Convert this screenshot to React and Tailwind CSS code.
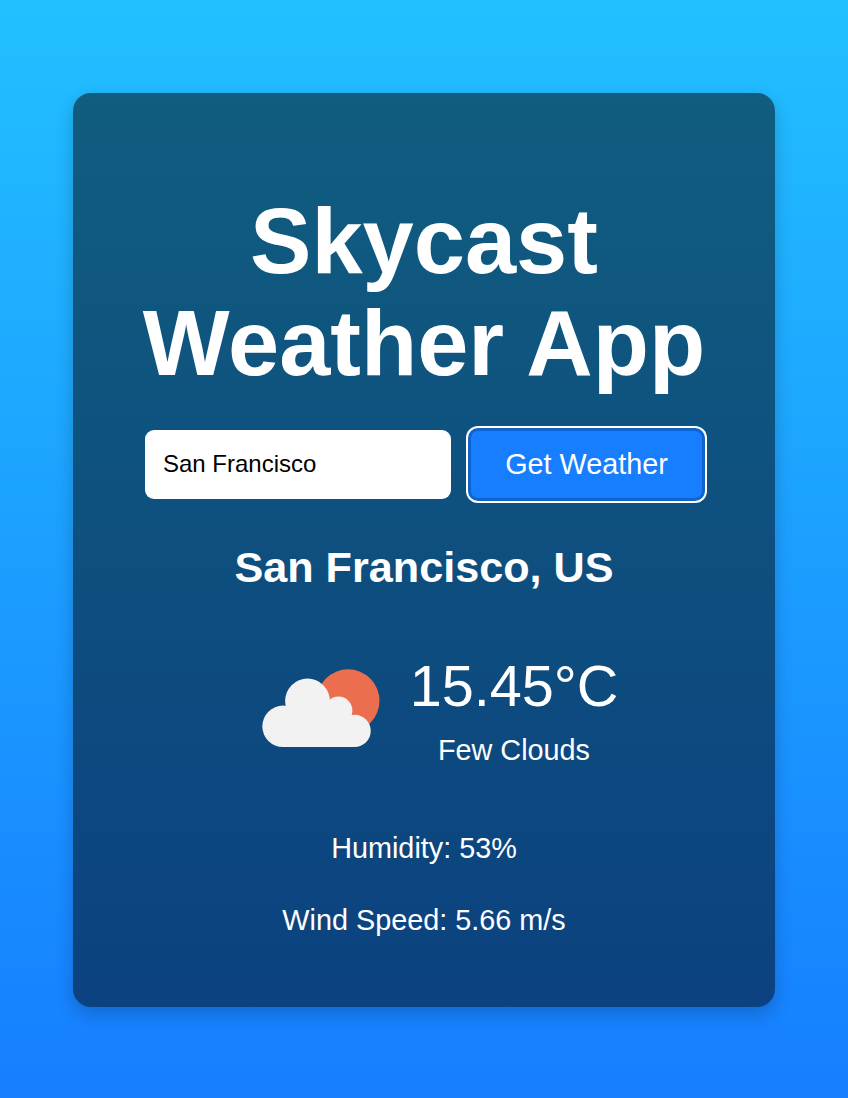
function FewCloudsIcon() {
  return (
    <svg className="h-[110px] w-[180px]" viewBox="0 0 180 110" aria-hidden="true">
      <circle cx="118.1" cy="49.7" r="31.4" fill="#eb6e4f" />
      <g fill="#f1f2f1">
        <circle cx="53" cy="75.3" r="20.7" />
        <circle cx="77.5" cy="50" r="22.4" />
        <circle cx="108.5" cy="59.5" r="13.9" />
        <circle cx="124.6" cy="79.9" r="16.1" />
        <path d="M53 58H108L123 70V96H53Z" />
      </g>
    </svg>
  );
}

export default function App() {
  return (
    <div className="flex h-[1098px] w-[848px] justify-center bg-linear-to-b/srgb from-[#22c0ff] to-[#167eff] pt-[93px] font-['Liberation_Sans',Arial,sans-serif] text-white">
      <main className="flex h-[914px] w-[702px] flex-col items-center rounded-[18px] bg-black/50 px-[72px] pt-[97px] text-center shadow-[0_7px_18px_rgba(0,0,0,0.2)]">
        <h1 className="w-[600px] text-[92px] leading-[102px] font-bold">
          Skycast
          <br />
          Weather App
        </h1>
        <form
          className="mt-[34px] ml-[2px] flex h-[73px] w-[560px] shrink-0 items-center justify-between"
          onSubmit={(e) => e.preventDefault()}
        >
          <input
            className="h-[69px] w-[306px] rounded-[9px] bg-white px-[18px] pb-[2px] text-[24px] text-black outline-none"
            defaultValue="San Francisco"
            aria-label="City"
          />
          <button className="h-[73px] w-[237px] rounded-[10px] border-[3px] border-[#1064cc] bg-[#167eff] pt-px text-[28.8px] ring-2 ring-white">
            Get Weather
          </button>
        </form>
        <h2 className="mt-[40px] text-[43.2px] leading-[52px] font-bold">San Francisco, US</h2>
        <div className="mt-[58px] flex items-start">
          <FewCloudsIcon />
          <div>
            <p className="text-[57.6px] leading-[70px]">15.45°C</p>
            <p className="mt-[7px] text-[28.8px] leading-[44px]">Few Clouds</p>
          </div>
        </div>
        <p className="mt-[54px] text-[28.8px] leading-[44px]">Humidity: 53%</p>
        <p className="mt-[28px] text-[28.8px] leading-[44px]">Wind Speed: 5.66 m/s</p>
      </main>
    </div>
  );
}
